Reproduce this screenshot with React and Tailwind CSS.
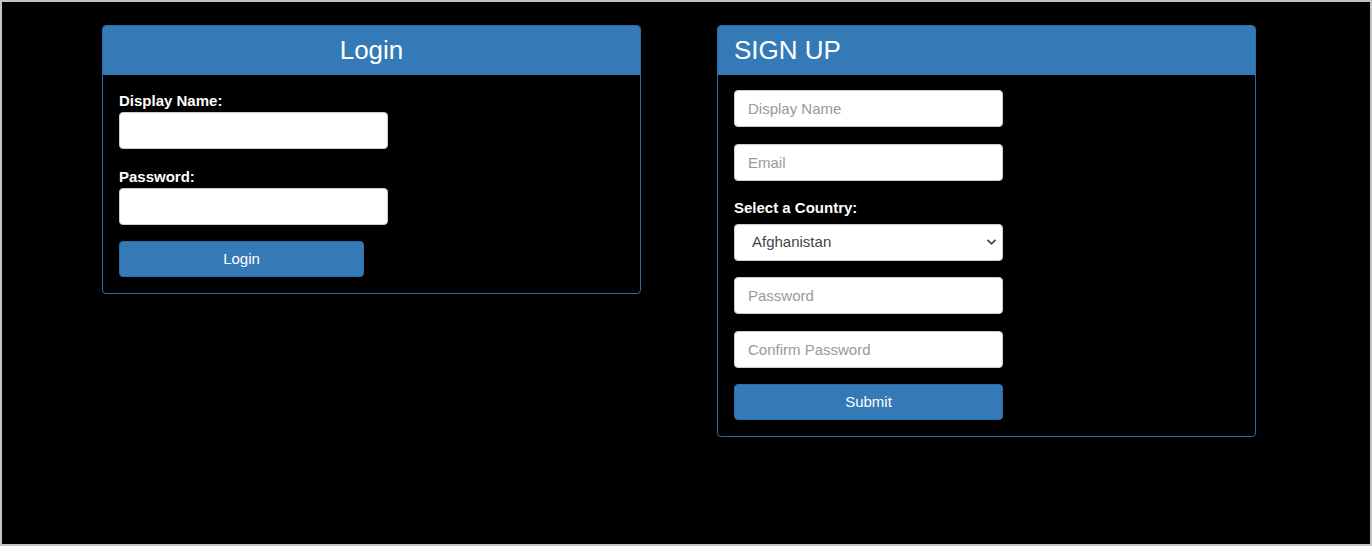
import React, { useState } from 'react';

const font = { fontFamily: '"Liberation Sans", Arial, sans-serif' };

const inputCls =
  'block w-[269px] h-[37px] px-[13px] bg-white text-[15px] text-[#555] border border-[#ccc] rounded-[4px] outline-none placeholder:text-[#999]';

const Panel = ({ title, center, children }) => (
  <div className="w-[539px] border border-[#2e6da4] rounded-[4px] bg-black">
    <div
      className={`h-[49px] flex items-center bg-[#337ab7] rounded-t-[3px] px-[16px] text-white text-[26px] ${
        center ? 'justify-center' : 'justify-start'
      }`}
    >
      {title}
    </div>
    <div className="px-[16px] pt-[15px] pb-[16px]">{children}</div>
  </div>
);

const Button = ({ children, w }) => (
  <button
    type="submit"
    className={`block ${w} h-[36px] bg-[#337ab7] text-white text-[15px] rounded-[4px] border border-[#2e6da4]`}
  >
    {children}
  </button>
);

const App = () => {
  const [country, setCountry] = useState('Afghanistan');

  return (
    <div className="w-[1372px] h-[546px] box-border border-2 border-[#c4c4c4] bg-black" style={font}>
      <div className="flex items-start gap-[76px] pl-[100px] pt-[23px]">
        <Panel title="Login" center>
          <form onSubmit={(e) => e.preventDefault()}>
            <label className="block text-white font-bold text-[15px] leading-[21px] mb-[1px]">Display Name:</label>
            <input type="text" className={inputCls} />
            <label className="block text-white font-bold text-[15px] leading-[21px] mt-[17px] mb-[1px]">Password:</label>
            <input type="password" className={inputCls} />
            <div className="mt-[16px]">
              <Button w="w-[245px]">Login</Button>
            </div>
          </form>
        </Panel>

        <Panel title="SIGN UP">
          <form onSubmit={(e) => e.preventDefault()}>
            <input type="text" placeholder="Display Name" className={inputCls} />
            <input type="email" placeholder="Email" className={`${inputCls} mt-[17px]`} />
            <label className="block text-white font-bold text-[15px] leading-[21px] mt-[16px] mb-[6px]">
              Select a Country:
            </label>
            <div className="relative w-[269px]">
              <select
                value={country}
                onChange={(e) => setCountry(e.target.value)}
                className="block w-[269px] h-[37px] pl-[17px] pr-[28px] bg-white text-[15px] text-[#444] border border-[#ccc] rounded-[4px] outline-none appearance-none"
              >
                <option>Afghanistan</option>
                <option>Albania</option>
                <option>Algeria</option>
              </select>
              <svg
                className="absolute right-[6px] top-[14px] pointer-events-none"
                width="11"
                height="8"
                viewBox="0 0 11 8"
                fill="none"
              >
                <path d="M1.5 1.8 L5.5 5.8 L9.5 1.8" stroke="#444" strokeWidth="1.8" />
              </svg>
            </div>
            <input type="password" placeholder="Password" className={`${inputCls} mt-[16px]`} />
            <input type="password" placeholder="Confirm Password" className={`${inputCls} mt-[17px]`} />
            <div className="mt-[16px]">
              <Button w="w-[269px]">Submit</Button>
            </div>
          </form>
        </Panel>
      </div>
    </div>
  );
};

export default App;
